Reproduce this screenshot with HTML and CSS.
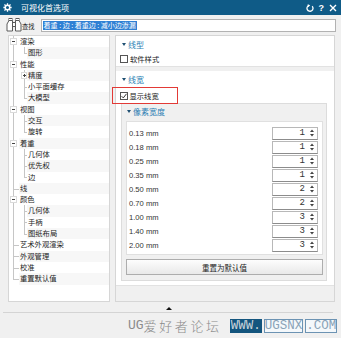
FILE: index.html
```html
<!DOCTYPE html>
<html lang="zh-CN">
<head>
    <meta charset="UTF-8">
    <meta name="viewport" content="width=device-width, initial-scale=1.0">
    <title>可视化首选项</title>
    <link rel="stylesheet" href="styles.css">
</head>
<body>
    <header class="titlebar">
        <svg class="gear" width="9" height="9" viewBox="0 0 10 10">
            <circle cx="5" cy="5" r="2.5" fill="none" stroke="#fff" stroke-width="1.6"/>
            <path d="M5 0.4v2M5 7.6v2M0.4 5h2M7.6 5h2M1.6 1.6l1.5 1.5M6.9 6.9l1.5 1.5M1.6 8.4l1.5-1.5M6.9 3.1l1.5-1.5" stroke="#fff" stroke-width="1.4"/>
        </svg>
        <span class="title">可视化首选项</span>
        <div class="tools">
            <svg width="8" height="8" viewBox="0 0 8 8">
                <path d="M3 1.4A3 3 0 1 0 6.2 2.2" fill="none" stroke="#fff" stroke-width="1.3"/>
                <path d="M1.6 0.2L4.2 1.3L2.2 3.2Z" fill="#fff"/>
            </svg>
            <span class="help">?</span>
            <svg width="8" height="8" viewBox="0 0 8 8">
                <path d="M1 1L7 7M7 1L1 7" stroke="#fff" stroke-width="1.4"/>
            </svg>
        </div>
    </header>

    <div class="search">
        <svg class="binoc" width="16" height="14" viewBox="0 0 16 14">
            <path d="M1 13V6L3 2.5H6.5V13Z" fill="#fff" stroke="#5a5a5a"/>
            <path d="M15 13V6L13 2.5H9.5V13Z" fill="#fff" stroke="#5a5a5a"/>
            <rect x="6.5" y="4.5" width="3" height="4" fill="#fff" stroke="#5a5a5a"/>
            <rect x="3" y="0.5" width="3" height="2" fill="#fff" stroke="#5a5a5a"/>
            <rect x="10" y="0.5" width="3" height="2" fill="#fff" stroke="#5a5a5a"/>
        </svg>
        <span class="find">查找</span>
        <div class="field"><span class="sel">着重 : 边 : 着重边 : 减小边渗漏</span></div>
    </div>

    <main class="main">
        <ul class="tree">
            <li class="row"><span class="g g0 pipe"><i class="box minus"></i></span><span class="label">渲染</span></li>
            <li class="row"><span class="g g0 pipe"></span><span class="g g1 ell"></span><span class="label">图形</span></li>
            <li class="row"><span class="g g0 pipe"><i class="box minus"></i></span><span class="label">性能</span></li>
            <li class="row"><span class="g g0 pipe"></span><span class="g g1 pipe"><i class="box plus"></i></span><span class="label">精度</span></li>
            <li class="row"><span class="g g0 pipe"></span><span class="g g1 tee"></span><span class="label">小平面缓存</span></li>
            <li class="row"><span class="g g0 pipe"></span><span class="g g1 ell"></span><span class="label">大模型</span></li>
            <li class="row"><span class="g g0 pipe"><i class="box minus"></i></span><span class="label">视图</span></li>
            <li class="row"><span class="g g0 pipe"></span><span class="g g1 tee"></span><span class="label">交互</span></li>
            <li class="row"><span class="g g0 pipe"></span><span class="g g1 ell"></span><span class="label">旋转</span></li>
            <li class="row"><span class="g g0 pipe"><i class="box minus"></i></span><span class="label">着重</span></li>
            <li class="row"><span class="g g0 pipe"></span><span class="g g1 tee"></span><span class="label">几何体</span></li>
            <li class="row"><span class="g g0 pipe"></span><span class="g g1 tee"></span><span class="label">优先权</span></li>
            <li class="row"><span class="g g0 pipe"></span><span class="g g1 ell"></span><span class="label">边</span></li>
            <li class="row"><span class="g g0 tee"></span><span class="label selected">线</span></li>
            <li class="row"><span class="g g0 pipe"><i class="box minus"></i></span><span class="label">颜色</span></li>
            <li class="row"><span class="g g0 pipe"></span><span class="g g1 tee"></span><span class="label">几何体</span></li>
            <li class="row"><span class="g g0 pipe"></span><span class="g g1 tee"></span><span class="label">手柄</span></li>
            <li class="row"><span class="g g0 pipe"></span><span class="g g1 ell"></span><span class="label">图纸布局</span></li>
            <li class="row"><span class="g g0 tee"></span><span class="label">艺术外观渲染</span></li>
            <li class="row"><span class="g g0 tee"></span><span class="label">外观管理</span></li>
            <li class="row"><span class="g g0 tee"></span><span class="label">校准</span></li>
            <li class="row"><span class="g g0 ell"></span><span class="label">重置默认值</span></li>
        </ul>

        <div class="props">
            <section class="card">
                <div class="head"><i class="caret"></i>线型</div>
                <div class="check"><span class="cb"></span>软件样式</div>
            </section>

            <section class="card">
                <div class="head"><i class="caret"></i>线宽</div>
                <div class="mark">
                    <div class="check"><span class="cb on">
                        <svg width="6" height="6" viewBox="0 0 6 6"><path d="M0.6 3.2L2.3 4.9L5.5 0.8" fill="none" stroke="#333" stroke-width="1"/></svg>
                    </span>显示线宽</div>
                </div>
                <div class="group">
                    <div class="head sub"><i class="caret"></i>像素宽度</div>
                    <div class="table" id="widths"></div>
                    <button class="reset">重置为默认值</button>
                </div>
            </section>
        </div>
    </main>

    <div class="splitter"><i class="up"></i></div>

    <footer class="brand">
        <span class="ug">UG</span><span class="cn">爱好者论坛</span>
        <span class="site"><span class="www">WWW.</span><span class="bx">UGSNX</span><span class="bx">.COM</span></span>
    </footer>

    <script type="text/javascript">
        const widths = [
            ['0.13 mm', 1], ['0.18 mm', 1], ['0.25 mm', 1],
            ['0.35 mm', 1], ['0.50 mm', 2], ['0.70 mm', 2],
            ['1.00 mm', 3], ['1.40 mm', 3], ['2.00 mm', 3]
        ]
        const tableElem = document.getElementById('widths')

        let templateRows = ''
        for (const item of widths) {
            templateRows += `
                <div class="trow">
                    <span class="mm">${item[0]}</span>
                    <div class="spin">
                        <span class="val">${item[1]}</span>
                        <svg width="4" height="8" viewBox="0 0 4 8"><path d="M0 3L2 0.6L4 3Z M0 5L2 7.4L4 5Z" fill="#444"/></svg>
                    </div>
                </div>
            `
        }
        tableElem.innerHTML = templateRows
    </script>
</body>
</html>
```

FILE: styles.css
```css
* {
    box-sizing: border-box;
}

body {
    margin: 0;
    width: 341px;
    height: 338px;
    overflow: hidden;
    background: #f0f0f0;
    font-family: 'Noto Sans CJK SC', 'Liberation Sans', sans-serif;
    font-size: 7.3px;
    color: #222;
}

/* title bar */
.titlebar {
    height: 15px;
    background: #0f5b87;
    color: #fff;
    display: flex;
    align-items: center;
    padding: 0 4px 0 3px;
}
.titlebar .gear {
    margin-right: 9px;
}
.titlebar .title {
    font-size: 8px;
    flex: 1;
}
.tools {
    display: flex;
    align-items: center;
    gap: 5px;
}
.tools .help {
    font-family: 'Liberation Sans', sans-serif;
    font-weight: bold;
    font-size: 9px;
    line-height: 8px;
}

/* search row */
.search {
    height: 20px;
    display: flex;
    align-items: center;
    padding: 0 5px 0 6px;
}
.find {
    font-size: 6.3px;
    margin: 0 6px 0 0;
    padding-top: 3px;
}
.field {
    flex: 1;
    height: 13px;
    background: #fff;
    border: 1px solid #b2b2b2;
    display: flex;
    align-items: center;
    padding-left: 1px;
}
.sel {
    background: #2f80d4;
    color: #fff;
    font-size: 7px;
    line-height: 9px;
    padding: 0 1px;
}

/* main area */
.main {
    height: 267px;
    display: flex;
    gap: 5px;
    padding: 0 6px 0 8px;
}

.tree {
    width: 102px;
    margin: 0;
    padding: 0;
    list-style: none;
    background: #fff;
    border: 1px solid #d6d6d6;
}
.row {
    height: 11.3px;
    display: flex;
}
.g {
    flex: none;
    display: flex;
    align-items: center;
    background-repeat: no-repeat;
}
.g0 {
    width: 10px;
    --x: 4px;
}
.g1 {
    width: 8px;
    --x: 5px;
}
.pipe {
    background-image: linear-gradient(#c6c6c6, #c6c6c6);
    background-size: 1px 100%;
    background-position: var(--x) 0;
}
.tee {
    background-image: linear-gradient(#c6c6c6, #c6c6c6), linear-gradient(#c6c6c6, #c6c6c6);
    background-size: 1px 100%, 100% 1px;
    background-position: var(--x) 0, var(--x) 55%;
}
.ell {
    background-image: linear-gradient(#c6c6c6, #c6c6c6), linear-gradient(#c6c6c6, #c6c6c6);
    background-size: 1px 55%, 100% 1px;
    background-position: var(--x) 0, var(--x) 55%;
}
.box {
    width: 7px;
    height: 7px;
    margin-left: calc(var(--x) - 3px);
    background: #fff;
    border: 1px solid #dadada;
    background-repeat: no-repeat;
    background-image: linear-gradient(#444, #444);
    background-size: 3px 1px;
    background-position: 1px 2px;
}
.box.plus {
    background-image: linear-gradient(#444, #444), linear-gradient(#444, #444);
    background-size: 3px 1px, 1px 3px;
    background-position: 1px 2px, 2px 1px;
}
.label {
    flex: 1;
    padding-left: 1px;
    line-height: 11.3px;
    white-space: nowrap;
}
.row:nth-child(even) .label {
    background: #f7f7f7;
}
.label.selected {
    background: #84c1d1;
}

/* property panel */
.props {
    width: 220px;
    border: 1px solid #d6d6d6;
    display: flex;
    flex-direction: column;
    gap: 4px;
}
.card {
    background: #fff;
    border-bottom: 1px solid #e2e2e2;
}
.head {
    height: 16px;
    display: flex;
    align-items: center;
    padding-left: 6px;
    color: #2d7fb4;
    font-size: 8px;
}
.caret {
    width: 0;
    height: 0;
    border-left: 2.5px solid transparent;
    border-right: 2.5px solid transparent;
    border-top: 3px solid #1f4f72;
    margin-right: 2px;
}
.check {
    height: 14px;
    display: flex;
    align-items: center;
    padding-left: 4px;
    font-size: 7.3px;
}
.cb {
    width: 8px;
    height: 8px;
    border: 1px solid #555;
    background: #fff;
    margin-right: 2px;
    display: flex;
    align-items: center;
    justify-content: center;
}
.mark {
    position: relative;
    z-index: 1;
    width: 66px;
    height: 17px;
    margin: 0 0 -2px -4px;
    border: 1.5px solid #e23a36;
    display: flex;
    align-items: center;
    padding-left: 6.5px;
}
.mark .check {
    padding-left: 0;
}

.group {
    margin: 1px 7px 4px 5px;
    background: #f0f0f0;
    border: 1px solid #dcdcdc;
    padding: 0 3px 5px 4px;
}
.head.sub {
    height: 14px;
    padding-left: 1px;
    margin-bottom: 3px;
}
.table {
    background: #fff;
    border: 1px solid #e0e0e0;
    padding: 4px 0 2px;
}
.trow {
    height: 14px;
    display: flex;
    align-items: center;
    justify-content: space-between;
    padding: 0 4px 0 2px;
}
.mm {
    font-family: 'Liberation Sans', sans-serif;
    font-size: 7.6px;
    color: #333;
}
.spin {
    width: 46px;
    height: 13px;
    border: 1px solid #b8b8b8;
    border-bottom-color: #8c8c8c;
    display: flex;
    align-items: center;
    justify-content: flex-end;
    padding-right: 3px;
    gap: 5px;
}
.val {
    font-family: 'Liberation Mono', monospace;
    font-size: 9px;
    color: #333;
}
.reset {
    display: block;
    width: 197px;
    height: 16px;
    margin-top: 4px;
    border: 1px solid #adadad;
    background: linear-gradient(#fdfdfd, #e9e9e9);
    font-family: 'Noto Sans CJK SC', sans-serif;
    font-size: 7.5px;
    color: #222;
    padding: 0;
}

/* bottom */
.splitter {
    height: 11px;
    margin: 0 8px 0 3px;
    border-bottom: 1px solid #d4d4d4;
    display: flex;
    justify-content: center;
    align-items: center;
    padding: 2px 0 0 1px;
}
.up {
    width: 0;
    height: 0;
    border-left: 3px solid transparent;
    border-right: 3px solid transparent;
    border-bottom: 3px solid #111;
}

.brand {
    height: 25px;
    display: flex;
    align-items: center;
    padding-left: 128px;
    color: #8a8a8a;
    font-size: 13px;
}
.ug {
    font-family: 'Liberation Mono', monospace;
    font-size: 13px;
}
.cn {
    letter-spacing: 2.6px;
    margin-right: 8px;
    font-weight: 300;
}
.site {
    font-family: 'Liberation Mono', monospace;
    font-size: 12.5px;
    display: flex;
    align-items: center;
}
.www {
    background: #14557e;
    color: #c9d3db;
    padding: 0 1px;
}
.bx {
    border: 1px solid #6c93b3;
    background: #f4f8fb;
    color: #8aa3b8;
    margin-left: 2px;
    line-height: 12px;
}
```
